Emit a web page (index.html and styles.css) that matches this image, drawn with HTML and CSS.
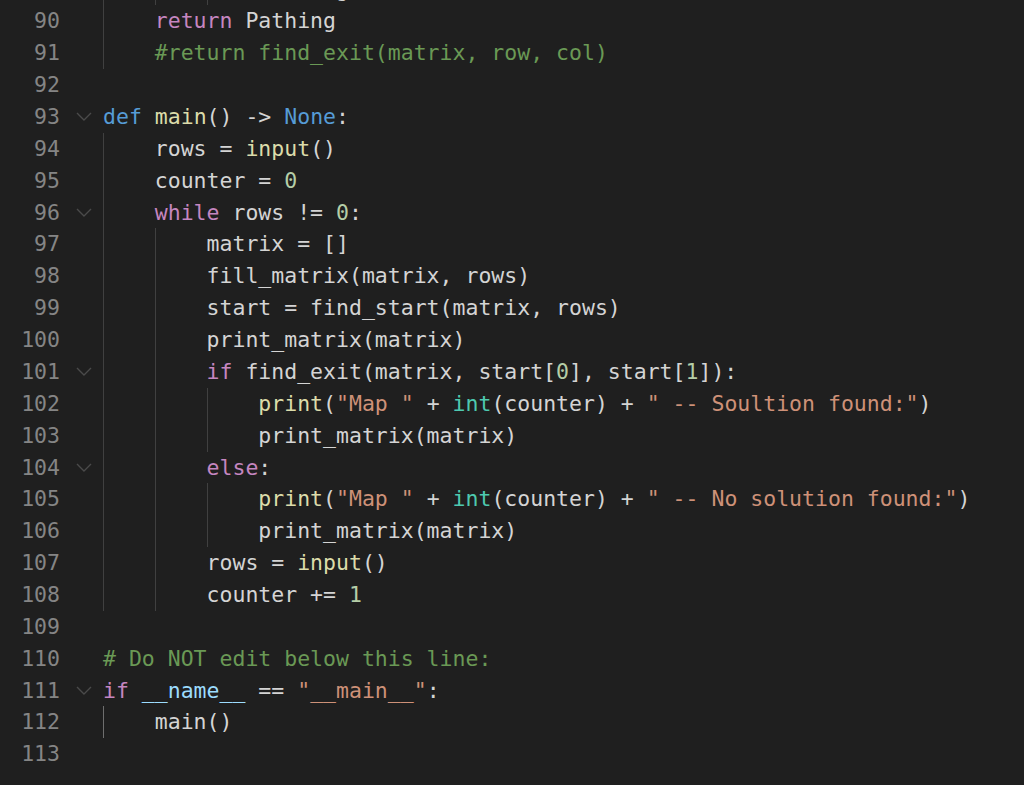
FILE: index.html
```html
<!DOCTYPE html>
<html>
<head>
<meta charset="utf-8">
<link rel="stylesheet" href="styles.css">
</head>
<body>
<div class="editor">
<div class="lines">
<div class="row"><span class="ln">89</span><span class="fold"></span><span class="code"><span class="ind">    </span><span class="ind">    </span><span class="ind">    </span>Pathing = [(row, col)]</span></div>
<div class="row"><span class="ln">90</span><span class="fold"></span><span class="code"><span class="ind">    </span><span class="kw">return</span> Pathing</span></div>
<div class="row"><span class="ln">91</span><span class="fold"></span><span class="code"><span class="ind">    </span><span class="cm">#return find_exit(matrix, row, col)</span></span></div>
<div class="row"><span class="ln">92</span><span class="fold"></span><span class="code"></span></div>
<div class="row"><span class="ln">93</span><span class="fold"><svg class="chev" viewBox="0 0 16 9"><polyline points="1,1 8,8 15,1"/></svg></span><span class="code"><span class="st">def</span> <span class="fn">main</span>() -&gt; <span class="st">None</span>:</span></div>
<div class="row"><span class="ln">94</span><span class="fold"></span><span class="code"><span class="ind">    </span>rows = <span class="fn">input</span>()</span></div>
<div class="row"><span class="ln">95</span><span class="fold"></span><span class="code"><span class="ind">    </span>counter = <span class="nm">0</span></span></div>
<div class="row"><span class="ln">96</span><span class="fold"><svg class="chev" viewBox="0 0 16 9"><polyline points="1,1 8,8 15,1"/></svg></span><span class="code"><span class="ind">    </span><span class="kw">while</span> rows != <span class="nm">0</span>:</span></div>
<div class="row"><span class="ln">97</span><span class="fold"></span><span class="code"><span class="ind">    </span><span class="ind">    </span>matrix = []</span></div>
<div class="row"><span class="ln">98</span><span class="fold"></span><span class="code"><span class="ind">    </span><span class="ind">    </span>fill_matrix(matrix, rows)</span></div>
<div class="row"><span class="ln">99</span><span class="fold"></span><span class="code"><span class="ind">    </span><span class="ind">    </span>start = find_start(matrix, rows)</span></div>
<div class="row"><span class="ln">100</span><span class="fold"></span><span class="code"><span class="ind">    </span><span class="ind">    </span>print_matrix(matrix)</span></div>
<div class="row"><span class="ln">101</span><span class="fold"><svg class="chev" viewBox="0 0 16 9"><polyline points="1,1 8,8 15,1"/></svg></span><span class="code"><span class="ind">    </span><span class="ind">    </span><span class="kw">if</span> find_exit(matrix, start[<span class="nm">0</span>], start[<span class="nm">1</span>]):</span></div>
<div class="row"><span class="ln">102</span><span class="fold"></span><span class="code"><span class="ind">    </span><span class="ind">    </span><span class="ind">    </span><span class="fn">print</span>(<span class="str">"Map "</span> + <span class="ty">int</span>(counter) + <span class="str">" -- Soultion found:"</span>)</span></div>
<div class="row"><span class="ln">103</span><span class="fold"></span><span class="code"><span class="ind">    </span><span class="ind">    </span><span class="ind">    </span>print_matrix(matrix)</span></div>
<div class="row"><span class="ln">104</span><span class="fold"><svg class="chev" viewBox="0 0 16 9"><polyline points="1,1 8,8 15,1"/></svg></span><span class="code"><span class="ind">    </span><span class="ind">    </span><span class="kw">else</span>:</span></div>
<div class="row"><span class="ln">105</span><span class="fold"></span><span class="code"><span class="ind">    </span><span class="ind">    </span><span class="ind">    </span><span class="fn">print</span>(<span class="str">"Map "</span> + <span class="ty">int</span>(counter) + <span class="str">" -- No solution found:"</span>)</span></div>
<div class="row"><span class="ln">106</span><span class="fold"></span><span class="code"><span class="ind">    </span><span class="ind">    </span><span class="ind">    </span>print_matrix(matrix)</span></div>
<div class="row"><span class="ln">107</span><span class="fold"></span><span class="code"><span class="ind">    </span><span class="ind">    </span>rows = <span class="fn">input</span>()</span></div>
<div class="row"><span class="ln">108</span><span class="fold"></span><span class="code"><span class="ind">    </span><span class="ind">    </span>counter += <span class="nm">1</span></span></div>
<div class="row"><span class="ln">109</span><span class="fold"></span><span class="code"></span></div>
<div class="row"><span class="ln">110</span><span class="fold"></span><span class="code"><span class="cm"># Do NOT edit below this line:</span></span></div>
<div class="row"><span class="ln">111</span><span class="fold"><svg class="chev" viewBox="0 0 16 9"><polyline points="1,1 8,8 15,1"/></svg></span><span class="code"><span class="kw">if</span> <span class="var">__name__</span> == <span class="str">"__main__"</span>:</span></div>
<div class="row"><span class="ln">112</span><span class="fold"></span><span class="code"><span class="ind active">    </span>main()</span></div>
<div class="row"><span class="ln">113</span><span class="fold"></span><span class="code"></span></div>
</div>
</div>
</body>
</html>
```
FILE: styles.css
```css
html, body {
  margin: 0;
  padding: 0;
  background: #1f1f1f;
}

.editor {
  width: 1024px;
  height: 785px;
  overflow: hidden;
  background: #1f1f1f;
  font-family: "DejaVu Sans Mono", "Liberation Mono", monospace;
  font-size: 21.5px;
  color: #d4d4d4;
}

.lines {
  margin-top: -26.4px;
}

.row {
  display: flex;
  height: 31.87px;
  line-height: 31.87px;
  white-space: pre;
}

.ln {
  width: 60px;
  flex: none;
  text-align: right;
  color: #858585;
}

.fold {
  width: 43px;
  flex: none;
  display: flex;
  align-items: center;
  justify-content: center;
  padding-left: 4px;
  box-sizing: border-box;
}

.chev {
  width: 16px;
  height: 9px;
  fill: none;
  stroke: #4a4a4a;
  stroke-width: 1.4;
}

.code {
  flex: 1;
}

.ind {
  display: inline-block;
  height: 31.87px;
  vertical-align: top;
  box-shadow: inset 1px 0 #404040;
}

.ind.active {
  box-shadow: inset 1px 0 #6e6e6e;
}

.kw { color: #c586c0; }
.st { color: #569cd6; }
.fn { color: #dcdcaa; }
.nm { color: #b5cea8; }
.str { color: #ce9178; }
.ty { color: #4ec9b0; }
.cm { color: #6a9955; }
.var { color: #9cdcfe; }
```
